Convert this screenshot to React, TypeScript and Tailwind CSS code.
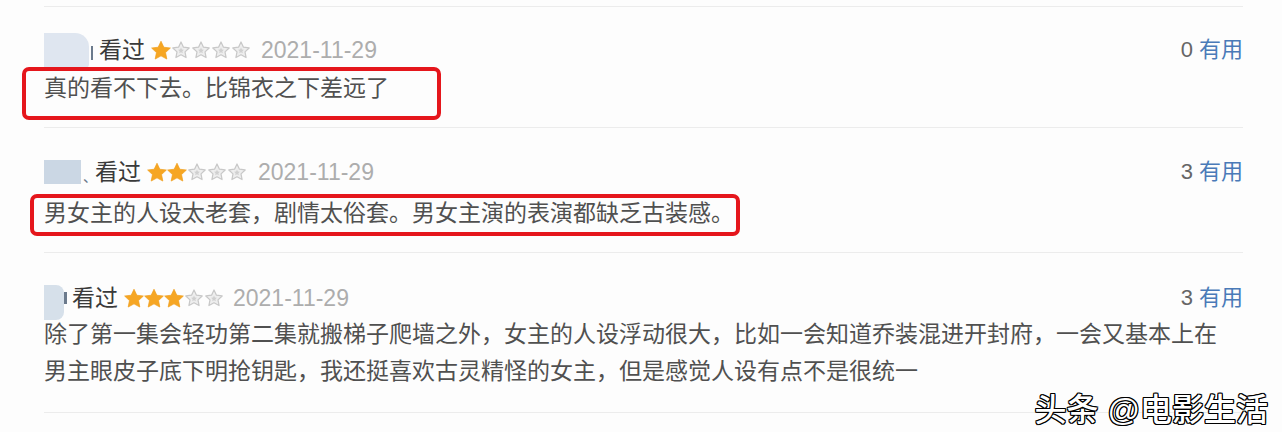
import React from "react";

const FONT = '"Liberation Sans", "Noto Sans CJK SC", sans-serif';

function Star({ filled }: { filled: boolean }) {
  if (filled) {
    return (
      <span className="w-[20px] h-[22px] flex items-center justify-center">
        <svg width="21" height="21" viewBox="1 1 22 22">
          <path
            d="M12 1.8l3.1 6.6 7.2.9-5.3 5 1.4 7.1L12 17.9l-6.4 3.5L7 14.3l-5.3-5 7.2-.9z"
            fill="#f6a623"
            stroke="#f0a020"
            strokeWidth="0.8"
            strokeLinejoin="round"
          />
        </svg>
      </span>
    );
  }
  return (
    <span className="w-[20px] h-[22px] flex items-center justify-center">
      <svg width="18" height="18" viewBox="1 1 22 22">
        <path
          d="M12 2.2l3 6.4 7 .9-5.1 4.8 1.3 6.9L12 17.8l-6.2 3.4 1.3-6.9L2 9.5l7-.9z"
          fill="#eeeeee"
          stroke="#c8c8c8"
          strokeWidth="1.5"
          strokeLinejoin="round"
        />
        <path d="M12 9l1.1 2.4 2.5.3-1.9 1.8.5 2.5-2.2-1.2-2.2 1.2.5-2.5-1.9-1.8 2.5-.3z" fill="#d0d0d0" />
      </svg>
    </span>
  );
}

function Stars({ n }: { n: number }) {
  return (
    <div className="flex items-center">
      {[0, 1, 2, 3, 4].map((i) => (
        <Star key={i} filled={i < n} />
      ))}
    </div>
  );
}

function Header({
  avatar,
  n,
  count,
  gapAfterStars,
}: {
  avatar: React.ReactNode;
  n: number;
  count: string;
  gapAfterStars: string;
}) {
  return (
    <div className="flex items-center h-[30px] justify-between">
      <div className="flex items-center">
        {avatar}
        <span className="text-[23px] text-[#3a3a3a] leading-[30px]">看过</span>
        <div className={`ml-[6px] ${gapAfterStars}`}>
          <Stars n={n} />
        </div>
        <span className="text-[23px] text-[#adadad] leading-[30px]">2021-11-29</span>
      </div>
      <div className="flex items-center text-[22px] leading-[30px]">
        <span className="text-[#666]">{count}</span>
        <span className="ml-[6px] text-[#4a7ab8]">有用</span>
      </div>
    </div>
  );
}

export default function App() {
  return (
    <div
      className="relative w-[1282px] h-[432px] bg-[#fdfdfd] overflow-hidden"
      style={{ fontFamily: FONT }}
    >
      <div className="ml-[44px] w-[1199px] pt-[6px]">
        {/* review 1 */}
        <div className="border-t border-[#ececec] pt-[28px] pb-[20px]">
          <Header
            n={1}
            count="0"
            gapAfterStars="mr-[10px]"
            avatar={
              <div className="flex items-center mr-[6px]">
                <div className="w-[45px] h-[35px] bg-[#dfe6f0] rounded-tr-[14px] rounded-br-[4px]" />
                <div className="ml-[2px] w-[2px] h-[14px] bg-[#6b7a8c] mt-[6px]" />
              </div>
            }
          />
          <div className="relative mt-[5px] text-[23px] leading-[37px] text-[#505050]">
            真的看不下去。比锦衣之下差远了
            <div className="absolute left-[-22px] top-[-3px] w-[419px] h-[53px] border-[4px] border-[#e5161c] rounded-[7px]" />
          </div>
        </div>
        {/* review 2 */}
        <div className="border-t border-[#ececec] pt-[29px] pb-[20px]">
          <Header
            n={2}
            count="3"
            gapAfterStars="mr-[11px]"
            avatar={
              <div className="flex items-center mr-[-2px]">
                <div className="w-[37px] h-[24px] bg-[#cbd7e4]" />
                <div className="ml-[2px] mt-[10px] text-[14px] leading-none text-[#6b7a8c]">、</div>
              </div>
            }
          />
          <div className="relative mt-[8px] text-[23px] leading-[37px] text-[#505050]">
            男女主的人设太老套，剧情太俗套。男女主演的表演都缺乏古装感。
            <div className="absolute left-[-14px] top-[-1px] w-[710px] h-[42px] border-[4px] border-[#e5161c] rounded-[7px]" />
          </div>
        </div>
        {/* review 3 */}
        <div className="border-t border-[#ececec] pt-[30px] pb-[22px]">
          <Header
            n={3}
            count="3"
            gapAfterStars="mr-[9px]"
            avatar={
              <div className="flex items-center mr-[5px]">
                <div className="w-[20px] h-[35px] bg-[#d6e0ea] rounded-r-[8px] mt-[8px]" />
                <div className="w-[3px] h-[12px] bg-[#6b7a8c]" />
              </div>
            }
          />
          <div className="mt-[3px] text-[23px] leading-[37px] text-[#505050] whitespace-nowrap">
            <div>除了第一集会轻功第二集就搬梯子爬墙之外，女主的人设浮动很大，比如一会知道乔装混进开封府，一会又基本上在</div>
            <div>男主眼皮子底下明抢钥匙，我还挺喜欢古灵精怪的女主，但是感觉人设有点不是很统一</div>
          </div>
        </div>
        <div className="border-t border-[#ececec]" />
      </div>
      <div
        className="absolute right-[14px] bottom-[3px] text-[32px] leading-[38px] text-white font-medium"
        style={{
          textShadow:
            "1px 1px 0 #000, -1px -1px 0 #000, 1px -1px 0 #000, -1px 1px 0 #000, 0 1px 0 #000, 0 -1px 0 #000, 1px 0 0 #000, -1px 0 0 #000",
        }}
      >
        头条 @电影生活
      </div>
    </div>
  );
}
